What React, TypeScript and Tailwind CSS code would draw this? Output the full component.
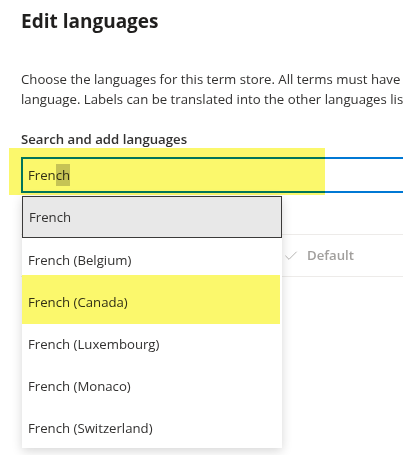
import { Check } from "lucide-react";

const options = [
  "French",
  "French (Belgium)",
  "French (Canada)",
  "French (Luxembourg)",
  "French (Monaco)",
  "French (Switzerland)",
];

export default function App() {
  return (
    <div
      className="relative w-[403px] h-[455px] overflow-hidden bg-white text-[#323130]"
      style={{ fontFamily: '"Segoe UI", "Open Sans", Arial, sans-serif' }}
    >
      <div className="w-[600px] pl-[21px]">
        <h1 className="mt-[7px] text-[19px] leading-[28px] font-bold text-[#201f1e]">Edit languages</h1>

        <p className="mt-[34px] text-[13.2px] leading-[20px] whitespace-nowrap">
          Choose the languages for this term store. All terms must have a label in the default
          <br />
          language. Labels can be translated into the other languages listed here.
        </p>

        <label className="block mt-[20px] text-[13.2px] leading-[20px] font-semibold">Search and add languages</label>

        <div className="mt-[8px] h-[36px] border-2 border-[#0078d4] flex items-center px-[5px] pt-[1px] text-[13.2px]">
          <span>
            Fren<span className="bg-[#c9c9c9] py-[2px]">ch</span>
          </span>
        </div>

        {/* table behind the dropdown */}
        <div className="mt-[41px] border-y border-[#edebe9] h-[43px] flex items-center pl-[262px] gap-[8px] text-[13.2px] font-semibold text-[#a19f9d]">
          <Check size={16} strokeWidth={1.2} className="text-[#a19f9d]" />
          <span>Default</span>
        </div>
      </div>

      {/* suggestions menu */}
      <ul className="absolute left-[22px] top-[196px] w-[260px] bg-white shadow-[0_3px_10px_rgba(0,0,0,0.16)]">
        {options.map((opt, i) => (
          <li
            key={opt}
            className={
              i === 0
                ? "h-[42px] flex items-center px-[6px] pt-[1px] text-[13.2px] bg-[#e8e8e8] border border-[#3b3a39]"
                : "h-[42px] flex items-center px-[6px] pt-[3px] text-[13.2px]"
            }
          >
            {opt}
          </li>
        ))}
      </ul>

      {/* highlighter marks */}
      <div className="absolute left-[9px] top-[148px] w-[316px] h-[47px] bg-[#fbf86c] mix-blend-multiply" />
      <div className="absolute left-[22px] top-[275px] w-[258px] h-[49px] bg-[#fbf86c] mix-blend-multiply" />
    </div>
  );
}
